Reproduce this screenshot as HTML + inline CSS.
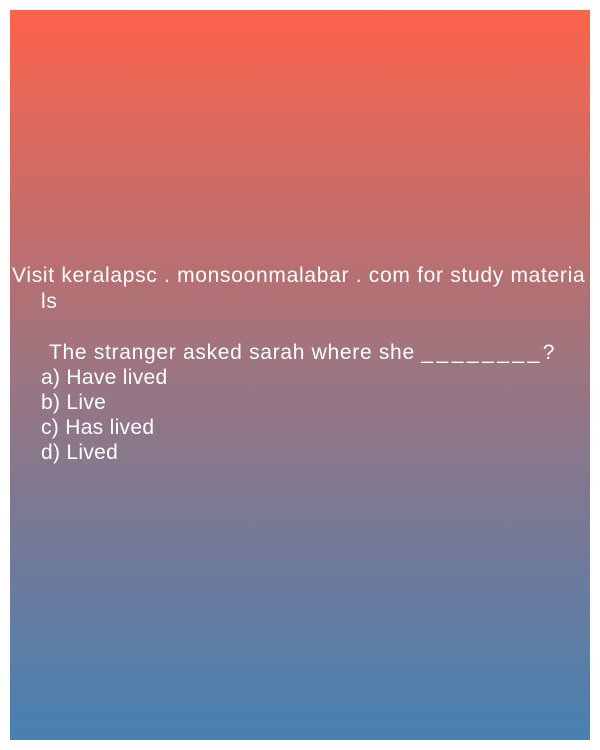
<!DOCTYPE html>
<html><head><style>
html,body{margin:0;padding:0;background:#fff;width:600px;height:750px;overflow:hidden}
.box{position:absolute;left:10px;top:10px;width:580px;height:730px;background:linear-gradient(#fc634b,#9b7581 50%,#4780b2)}
.t{position:absolute;color:#fff;font-family:"Liberation Sans",sans-serif;font-size:21px;line-height:25px;white-space:pre;letter-spacing:0.7px}
.u{letter-spacing:3.5px}
</style></head><body>
<div class="box"></div>
<div class="t" style="left:12px;top:263px">Visit keralapsc . monsoonmalabar . com for study materia</div>
<div class="t" style="left:41px;top:289px">ls</div>
<div class="t" style="left:49px;top:340px">The stranger asked sarah where she <span class="u">________</span>?</div>
<div class="t" style="left:41px;top:365px;letter-spacing:0.3px">a) Have lived
b) Live
c) Has lived
d) Lived</div>
</body></html>
